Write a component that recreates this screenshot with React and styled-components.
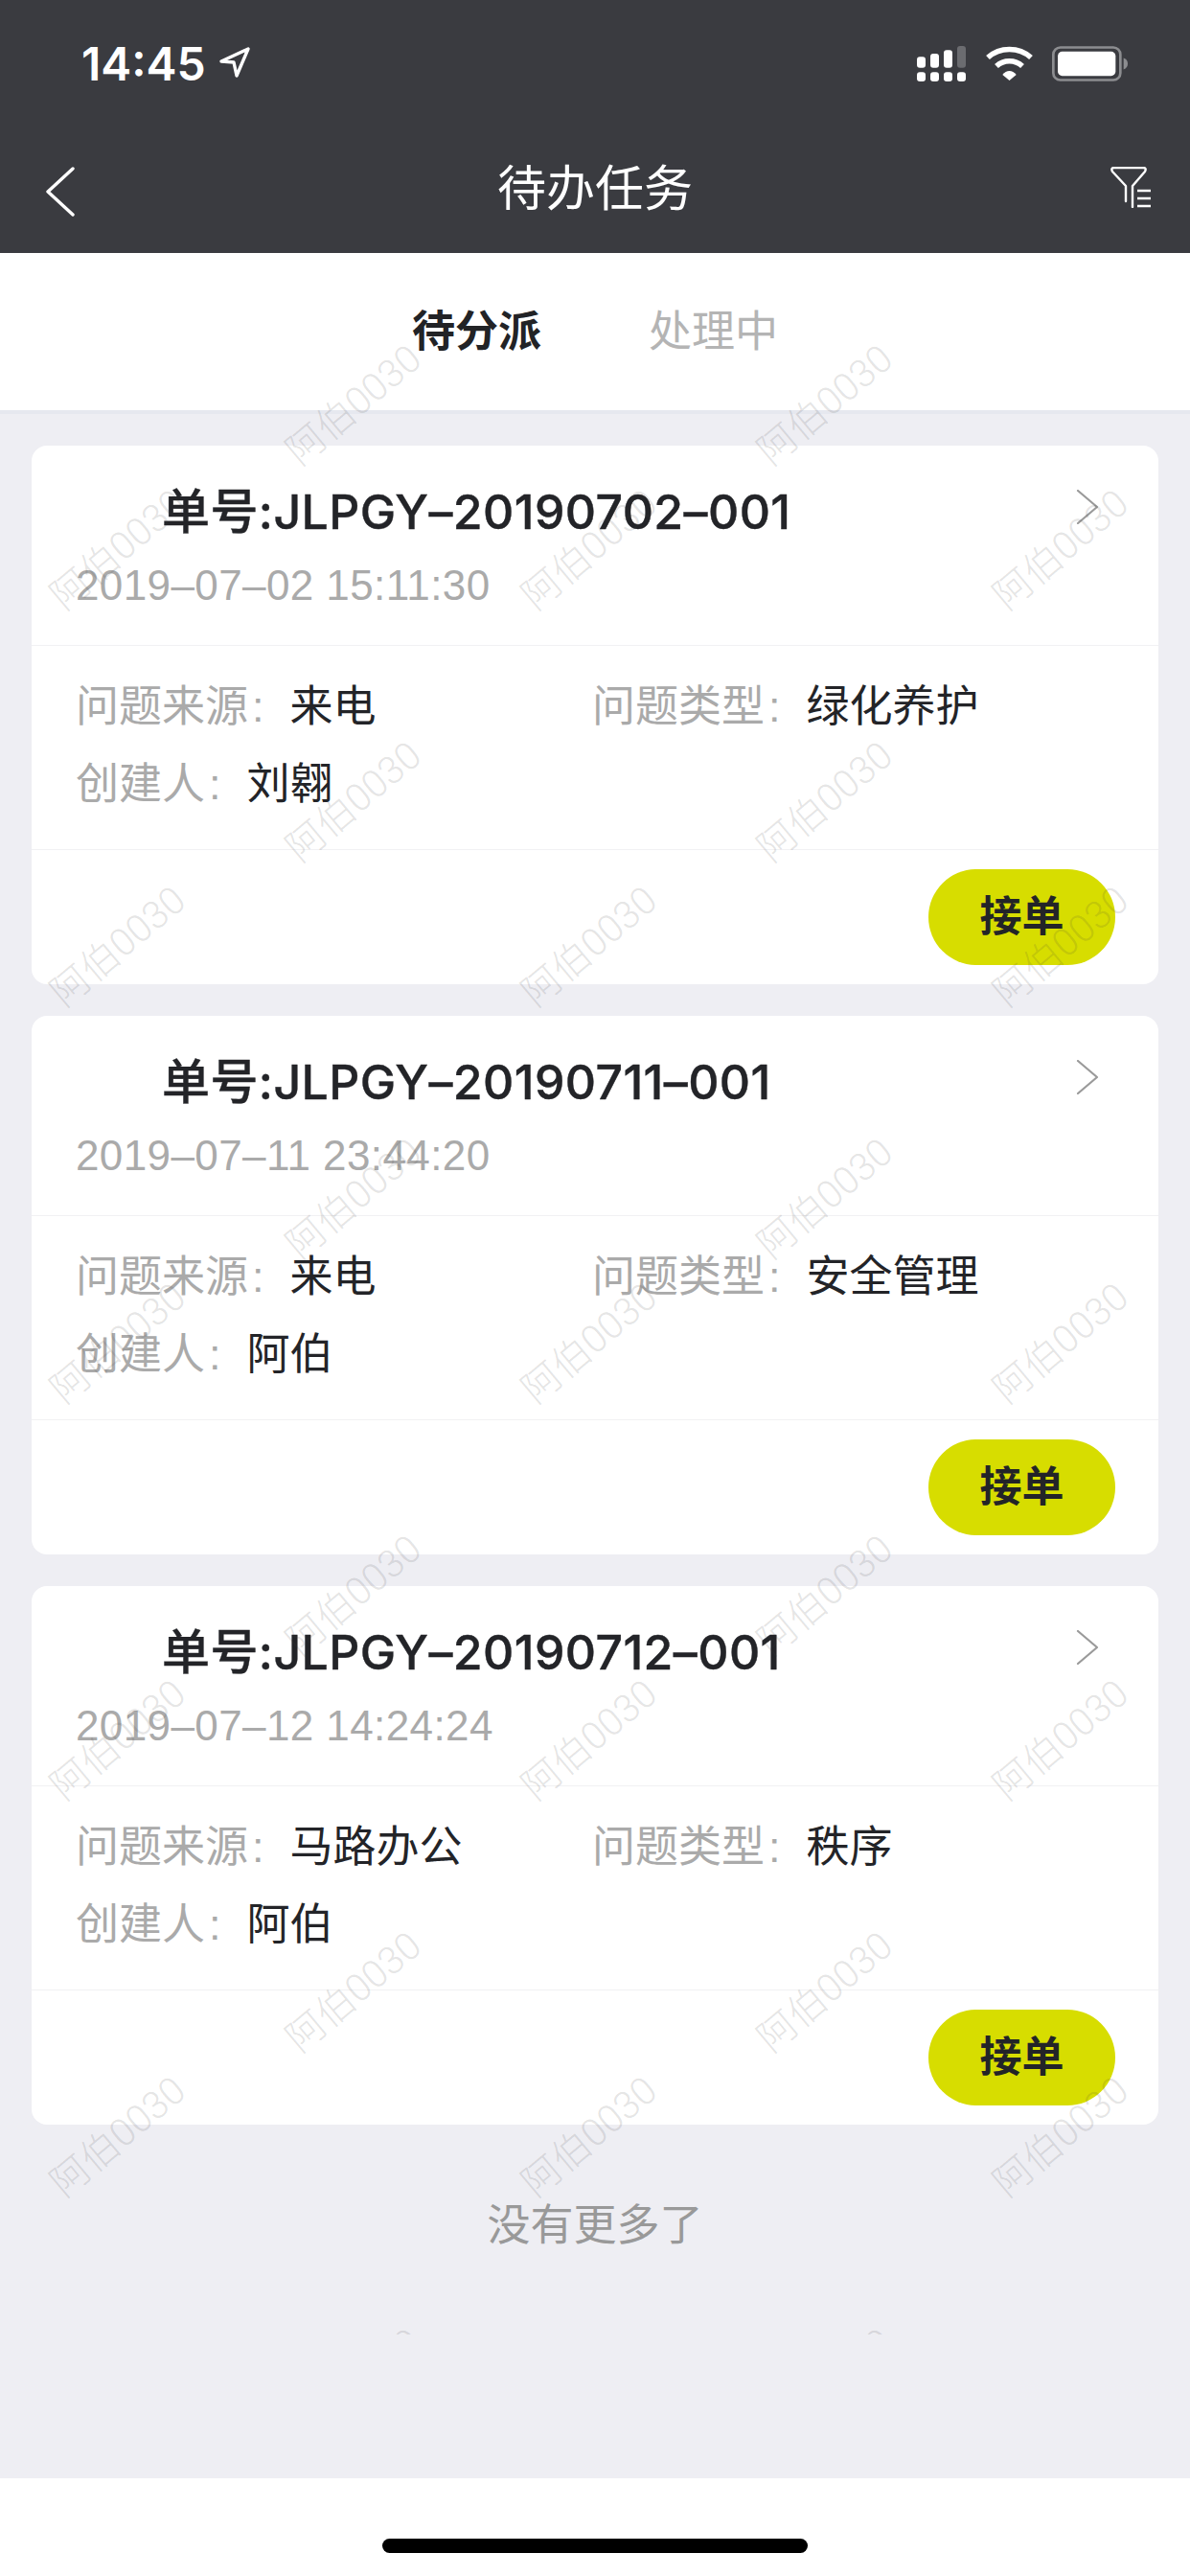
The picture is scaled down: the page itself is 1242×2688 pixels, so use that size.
import styled, { createGlobalStyle } from 'styled-components'

const GlobalStyle = createGlobalStyle`
html, body {
    margin: 0;
    padding: 0;
    background: #eeeef3;
}
* {
    box-sizing: border-box;
}
`

const FONT = '"Liberation Sans", "Noto Sans CJK SC", sans-serif'

const orders = [
    { no: 'JLPGY–20190702–001', time: '2019–07–02 15:11:30', source: '来电', type: '绿化养护', creator: '刘翱' },
    { no: 'JLPGY–20190711–001', time: '2019–07–11 23:44:20', source: '来电', type: '安全管理', creator: '阿伯' },
    { no: 'JLPGY–20190712–001', time: '2019–07–12 14:24:24', source: '马路办公', type: '秩序', creator: '阿伯' },
]

const marks = []
for (const y of [571, 985, 1399, 1813, 2227]) {
    for (const x of [121, 613, 1105]) marks.push({ x, y })
}
for (const y of [420, 834, 1248, 1662, 2076, 2490]) {
    for (const x of [367, 859]) marks.push({ x, y })
}

const App = () => {
    return (
        <Page>
            <GlobalStyle />
            <Header>
                <StatusBar>
                    <Clock>
                        14:45
                        <svg width="32" height="32" viewBox="0 0 32 32" fill="none">
                            <path d="M2 15 L30 2 L18 30 L15 16 Z" stroke="#fff" strokeWidth="3.4" strokeLinejoin="round" />
                        </svg>
                    </Clock>
                    <StatusIcons>
                        <svg width="52" height="37" viewBox="0 0 156 111">
                            {[0, 42, 84, 126].map((x) => (
                                <rect key={x} x={x} y="82" width="27" height="29" rx="9" fill="#fff" />
                            ))}
                            <rect x="0" y="34" width="27" height="34" rx="9" fill="#fff" />
                            <rect x="42" y="24" width="27" height="44" rx="9" fill="#fff" />
                            <rect x="84" y="13" width="27" height="55" rx="9" fill="#fff" />
                            <rect x="126" y="0" width="27" height="68" rx="9" fill="#6b6c70" />
                        </svg>
                        <svg width="49" height="36" viewBox="0 0 147 108">
                            <path d="M6 36 C44 2 103 2 141 36" fill="none" stroke="#fff" strokeWidth="17" strokeLinejoin="round" />
                            <path d="M33 63 C56 42 91 42 114 63" fill="none" stroke="#fff" strokeWidth="17" />
                            <path d="M52 90 C64 74 83 74 95 90 L73.500 108 Z" fill="#fff" />
                        </svg>
                        <svg width="79" height="37" viewBox="0 0 237 110">
                            <rect x="4" y="4" width="210" height="102" rx="22" fill="none" stroke="#8c8d90" strokeWidth="8" />
                            <rect x="18" y="17" width="181" height="76" rx="14" fill="#fff" />
                            <path d="M224 37 C233 40 237 47 237 55 C237 63 233 70 224 73 Z" fill="#8c8d90" />
                        </svg>
                    </StatusIcons>
                </StatusBar>
                <NavBar>
                    <BackIcon viewBox="0 0 30 52" fill="none">
                        <path d="M28 2 L2 26 L28 50" stroke="#fff" strokeWidth="3.4" strokeLinecap="round" strokeLinejoin="round" />
                    </BackIcon>
                    <NavTitle>待办任务</NavTitle>
                    <FilterIcon viewBox="0 0 43 43" fill="none">
                        <path d="M16 36 V20 L2 5 Q0 1 4 1 H34 Q38 1 36 5 L23 20 V42" stroke="#fff" strokeWidth="2.4" strokeLinecap="round" strokeLinejoin="round" />
                        <path d="M28 25 H42 M28 33 H42 M28 41 H42" stroke="#fff" strokeWidth="2.6" />
                    </FilterIcon>
                </NavBar>
            </Header>

            <Tabs>
                <Tab $active>待分派</Tab>
                <Tab>处理中</Tab>
            </Tabs>

            <List>
                {orders.map((item) => (
                    <Card key={item.no}>
                        <CardHead>
                            <OrderNo>单号:{item.no}</OrderNo>
                            <OrderTime>{item.time}</OrderTime>
                            <Chevron viewBox="0 0 24 36" fill="none">
                                <path d="M2 1 L22 18 L2 35" stroke="#9a9a9a" strokeWidth="2.2" strokeLinecap="round" strokeLinejoin="round" />
                            </Chevron>
                        </CardHead>
                        <CardBody>
                            <InfoRow>
                                <InfoCell>
                                    <Label>问题来源<Colon>:</Colon></Label>
                                    <Value>{item.source}</Value>
                                </InfoCell>
                                <InfoCell>
                                    <Label>问题类型<Colon>:</Colon></Label>
                                    <Value>{item.type}</Value>
                                </InfoCell>
                            </InfoRow>
                            <InfoRow>
                                <InfoCell>
                                    <Label>创建人<Colon>:</Colon></Label>
                                    <Value>{item.creator}</Value>
                                </InfoCell>
                            </InfoRow>
                        </CardBody>
                        <CardFoot>
                            <TakeButton>接单</TakeButton>
                        </CardFoot>
                    </Card>
                ))}
                <NoMore>没有更多了</NoMore>
            </List>

            <HomeBar>
                <HomeIndicator />
            </HomeBar>

            <Watermarks>
                {marks.map((m) => (
                    <Mark key={`${m.x}-${m.y}`} style={{ left: m.x, top: m.y }}>阿伯0030</Mark>
                ))}
            </Watermarks>
        </Page>
    )
}

export default App

const Page = styled.div`
position: relative;
width: 1242px;
height: 2688px;
display: flex;
flex-direction: column;
overflow: hidden;
background: #eeeef3;
font-family: ${FONT};
`

const Header = styled.header`
position: relative;
z-index: 2;
height: 264px;
background: #3a3b40;
color: #fff;
display: flex;
flex-direction: column;
`

const StatusBar = styled.div`
height: 132px;
padding: 46px 65px 0 85px;
display: flex;
justify-content: space-between;
align-items: flex-start;
`

const Clock = styled.div`
display: flex;
align-items: center;
gap: 14px;
height: 40px;
font-family: Inter, sans-serif;
font-size: 48px;
font-weight: 600;

svg {
    margin-top: -3px;
}
`

const StatusIcons = styled.div`
display: flex;
align-items: flex-start;
gap: 20px;
padding-top: 2px;
`

const NavBar = styled.div`
position: relative;
flex: 1;
padding: 0 40px 0 48px;
display: flex;
align-items: center;
justify-content: space-between;
`

const BackIcon = styled.svg`
width: 30px;
height: 52px;
margin-top: 3px;
`

const NavTitle = styled.h1`
position: absolute;
left: 0;
right: 0;
top: 36px;
margin: 0;
text-align: center;
font-size: 51px;
line-height: 60px;
font-weight: 400;
`

const FilterIcon = styled.svg`
width: 43px;
height: 43px;
margin-top: -5px;
`

const Tabs = styled.nav`
height: 168px;
padding: 0 0 8px;
background: #fff;
border-bottom: 4px solid #e6e8ef;
display: flex;
justify-content: center;
align-items: center;
gap: 112px;
`

const Tab = styled.div`
font-size: 45px;
font-weight: ${(props) => (props.$active ? 700 : 400)};
color: ${(props) => (props.$active ? '#222326' : '#b4b4b4')};
`

const List = styled.main`
flex: 1;
padding: 33px 33px 0;
display: flex;
flex-direction: column;
gap: 33px;
`

const Card = styled.section`
height: 562px;
background: #fff;
border-radius: 16px;
display: flex;
flex-direction: column;
`

const CardHead = styled.div`
position: relative;
height: 209px;
padding: 41px 46px 0;
border-bottom: 1px solid #f1f1f3;
`

const OrderNo = styled.div`
padding-left: 90px;
font-family: Inter, "Noto Sans CJK SC", sans-serif;
font-size: 50px;
line-height: 56px;
font-weight: 500;
letter-spacing: 0.4px;
-webkit-text-stroke: 0.4px #232428;
color: #232428;
`

const OrderTime = styled.div`
margin-top: 21px;
font-size: 44px;
line-height: 56px;
letter-spacing: 0.4px;
color: #aaaaaa;
`

const Chevron = styled.svg`
position: absolute;
right: 62px;
top: 46px;
width: 24px;
height: 36px;
`

const CardBody = styled.div`
height: 213px;
padding: 36px 46px 0;
border-bottom: 1px solid #f1f1f3;
display: flex;
flex-direction: column;
gap: 25px;
`

const InfoRow = styled.div`
display: grid;
grid-template-columns: 539px 1fr;
`

const InfoCell = styled.div`
display: flex;
font-size: 45px;
line-height: 56px;
`

const Label = styled.span`
color: #aaaaaa;
`

const Colon = styled.span`
margin: 0 27px 0 4px;
`

const Value = styled.span`
color: #232428;
`

const CardFoot = styled.div`
flex: 1;
padding: 20px 45px 0 0;
display: flex;
justify-content: flex-end;
align-items: flex-start;
`

const TakeButton = styled.button`
width: 195px;
height: 100px;
padding: 0 0 9px;
border: none;
border-radius: 50px;
background: #d7dd00;
color: #232428;
font-family: inherit;
font-size: 44px;
font-weight: 700;
`

const NoMore = styled.div`
margin-top: 45px;
text-align: center;
font-size: 45px;
line-height: 56px;
color: #999999;
`

const HomeBar = styled.footer`
height: 102px;
background: #fff;
display: flex;
justify-content: center;
align-items: flex-start;
padding-top: 63px;
`

const HomeIndicator = styled.div`
width: 444px;
height: 15px;
border-radius: 8px;
background: #000;
`

const Watermarks = styled.div`
position: absolute;
z-index: 1;
left: 0;
top: 0;
width: 100%;
height: 2436px;
overflow: hidden;
pointer-events: none;
`

const Mark = styled.span`
position: absolute;
transform: translate(-50%, -50%) rotate(-40deg);
white-space: nowrap;
font-family: Roboto, "Noto Sans CJK SC", sans-serif;
font-size: 40px;
font-weight: 300;
color: rgba(60, 60, 60, 0.15);
`
